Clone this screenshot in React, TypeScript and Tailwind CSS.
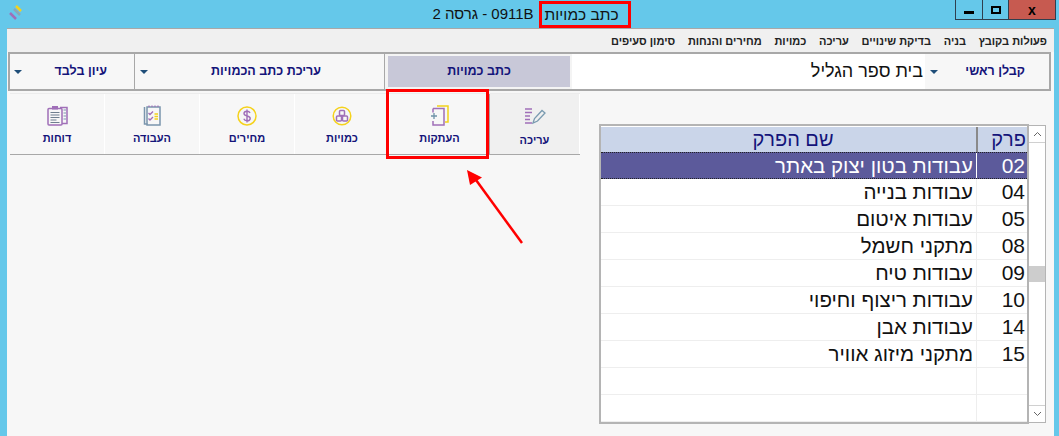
import { ReactNode } from 'react';

const menuItems = ['פעולות בקובץ', 'בניה', 'בדיקת שינויים', 'עריכה', 'כמויות', 'מחירים והנחות', 'סימון סעיפים'];

const rows = [
    ['02', 'עבודות בטון יצוק באתר'],
    ['04', 'עבודות בנייה'],
    ['05', 'עבודות איטום'],
    ['08', 'מתקני חשמל'],
    ['09', 'עבודות טיח'],
    ['10', 'עבודות ריצוף וחיפוי'],
    ['14', 'עבודות אבן'],
    ['15', 'מתקני מיזוג אוויר'],
    ['', ''],
    ['', ''],
];

const Caret = () => <span className="w-0 h-0 border-x-[4px] border-x-transparent border-t-[4px] border-t-[#1f4e79]" />;

const EditIcon = () => (
    <svg width="22" height="18" viewBox="0 0 22 18" fill="none">
        <path d="M1 2h7M1 5.500h7M1 9h5M1 12.500h5M1 16h7" stroke="#a06fb8" strokeWidth="1.500" />
        <path d="M9 16l1.500-4.500L18 3.500l3 2.500-7.500 8z" stroke="#7a9bb0" strokeWidth="1.300" />
    </svg>
);

const CopyIcon = () => (
    <svg width="20" height="21" viewBox="0 0 20 21" fill="none">
        <path d="M7 1h11v16h-3" stroke="#f2d21c" strokeWidth="1.500" />
        <path d="M3 3.500h11V20H3v-4M3 7.500V3.500" stroke="#a06fb8" strokeWidth="1.500" />
        <path d="M1 11h6M4 8v6" stroke="#6f93a8" strokeWidth="1.300" />
    </svg>
);

const QuantityIcon = () => (
    <svg width="20" height="20" viewBox="0 0 20 20" fill="none">
        <circle cx="10" cy="10" r="8.800" stroke="#f5d21c" strokeWidth="1.500" />
        <rect x="7.500" y="4.500" width="5" height="5" rx="1" stroke="#a06fb8" strokeWidth="1.500" />
        <rect x="4.500" y="10" width="5" height="5" rx="1" stroke="#a06fb8" strokeWidth="1.500" />
        <rect x="10.500" y="10" width="5" height="5" rx="1" stroke="#a06fb8" strokeWidth="1.500" />
    </svg>
);

const PriceIcon = () => (
    <svg width="20" height="20" viewBox="0 0 20 20" fill="none">
        <circle cx="10" cy="10" r="9" stroke="#f5d21c" strokeWidth="1.500" />
        <path d="M13 7c-.5-1.300-1.600-1.800-3-1.800-1.700 0-3 .8-3 2.300 0 3.300 6.200 1.600 6.200 4.900 0 1.500-1.400 2.400-3.200 2.400-1.500 0-2.700-.6-3.200-2M10 3.500v13" stroke="#a06fb8" strokeWidth="1.400" />
    </svg>
);

const WorkIcon = () => (
    <svg width="18" height="21" viewBox="0 0 18 21" fill="none">
        <path d="M1.500 2v17h3" stroke="#7a95ad" strokeWidth="1.500" />
        <rect x="4" y="2" width="13" height="18" stroke="#7a95ad" strokeWidth="1.500" />
        <path d="M6 2V0.500M9 2V0.500M12 2V0.500M15 2V0.500" stroke="#a06fb8" strokeWidth="1.200" />
        <path d="M5.500 8l1.500 1.500L10 6.500M5.500 13.500L7 15l3-3" stroke="#a06fb8" strokeWidth="1.400" />
        <path d="M11.500 9h3.500M11.500 11.500h3.500M11.500 14h3.500" stroke="#f2d21c" strokeWidth="1.300" />
    </svg>
);

const ReportIcon = () => (
    <svg width="21" height="21" viewBox="0 0 21 21" fill="none">
        <path d="M13 2.500h7v16h-5" stroke="#a06fb8" strokeWidth="1.500" />
        <rect x="1" y="3.500" width="14" height="16.500" rx="1" stroke="#a06fb8" strokeWidth="1.500" />
        <rect x="5" y="1" width="6" height="3.500" fill="#a06fb8" />
        <path d="M3.500 7.500h9M3.500 10h9M3.500 12.500h9M3.500 15h6M3.500 17.500h9" stroke="#6f7f8f" strokeWidth="1.100" />
        <path d="M16.500 5h2.500M16.500 8h2.500M16.500 11h2.500M16.500 14h2.500" stroke="#7a95ad" strokeWidth="1.100" />
    </svg>
);

const Tab = ({ icon, label, active, className }: { icon: ReactNode; label: string; active?: boolean; className?: string }) => (
    <div className={`h-full flex flex-col items-center pt-[10px] border-r border-white ${active ? 'bg-[#f0f0f0]' : ''} ${className ?? ''}`}>
        <div className="h-[23px] flex items-center justify-center">{icon}</div>
        <span className={`text-[11px] leading-[14px] font-bold text-[#14147a] ${active ? 'mt-[6px]' : 'mt-[4px]'}`}>{label}</span>
    </div>
);

const Arrow = () => (
    <svg className="absolute left-[460px] top-[168px]" width="70" height="80" viewBox="0 0 70 80" fill="none">
        <path d="M62 75L16 12" stroke="#f00" strokeWidth="2.500" />
        <path d="M7 2L22 9.500L10 17z" fill="#f00" />
    </svg>
);

export default function App() {
    return (
        <div className="relative w-[1059px] h-[436px] overflow-hidden bg-[#65c8ea] flex flex-col font-['Liberation_Sans',sans-serif]">
            {/* title bar */}
            <div className="h-[28px] shrink-0 grid grid-cols-[1fr_auto_1fr] items-start">
                <svg className="ml-[5px] mt-[2px]" width="25" height="22" viewBox="0 0 25 22" fill="none">
                    <path d="M5 11l6 6" stroke="#a06fb8" strokeWidth="2.500" />
                    <path d="M9 7l6 6" stroke="#8da5b8" strokeWidth="2.500" />
                    <path d="M11 4l5 5" stroke="#f5d21c" strokeWidth="2.500" />
                </svg>
                <div dir="rtl" className="flex items-center h-[28px] pl-[4px] text-[15px] text-[#111]">
                    <span className="h-[27px] leading-[21px] pr-[9px] pl-[3px] text-[15.500px] border-[3px] border-[#f00] whitespace-nowrap">כתב כמויות</span>
                    <span className="mr-[5px] whitespace-nowrap">0911B - גרסה 2</span>
                </div>
                <div className="flex justify-end pr-[3px]">
                    <div className="flex h-[20px] border border-t-0 border-[#2f3f4f]">
                        <div className="w-[27px] border-r border-[#2f3f4f] flex items-center justify-center">
                            <span className="w-[10px] h-[3px] mt-[5px] bg-black" />
                        </div>
                        <div className="w-[26px] border-r border-[#2f3f4f] flex items-center justify-center">
                            <span className="w-[10px] h-[8px] border-2 border-black" />
                        </div>
                        <div className="w-[46px] bg-[#c75a50] flex items-center justify-center text-[14px] font-bold text-black leading-none">x</div>
                    </div>
                </div>
            </div>

            {/* client area */}
            <div className="flex-1 ml-[7px] mr-[5px] bg-[#f7f7f7] border-t border-[#a8a8a8] flex flex-col">
                <div dir="rtl" className="h-[23px] shrink-0 bg-[#f0f0f0] flex items-center gap-[12.700px] pr-[7px] pt-px text-[11px] font-bold text-[#222]">
                    {menuItems.map((item) => (
                        <span key={item}>{item}</span>
                    ))}
                </div>

                <div dir="rtl" className="h-[39px] shrink-0 mr-[3px] ml-px flex border-2 border-[#a8a8a8] bg-[#f7f7f7] text-[#14147a] text-[12.500px] font-bold">
                    <div className="w-[124px] flex items-center justify-between pr-[24px] pl-[5px]">
                        <span>קבלן ראשי</span>
                        <Caret />
                    </div>
                    <div className="w-[353px] bg-white flex items-center pr-[2px] text-[#111]">
                        <span className="text-[18px] font-normal">בית ספר הגליל</span>
                    </div>
                    <div className="w-[187px] bg-[#c8c8d8] border-2 border-[#f4f4f4] border-l-[3px] flex items-center justify-center">כתב כמויות</div>
                    <div className="w-[251px] border-x border-[#a8a8a8] flex items-center justify-between pr-[63px] pl-[5px]">
                        <span>עריכת כתב הכמויות</span>
                        <Caret />
                    </div>
                    <div className="flex-1 flex items-center justify-between pr-[27px] pl-[4px]">
                        <span>עיון בלבד</span>
                        <Caret />
                    </div>
                </div>

                <div className="flex-1 flex justify-between">
                    {/* tool tabs */}
                    <div className="ml-[3px] mt-[2px] w-[570px] h-[62px] flex border-b border-[#a8a8a8] border-t border-t-[#ececec]">
                        <Tab className="w-[95px]" icon={<ReportIcon />} label="דוחות" />
                        <Tab className="w-[95px]" icon={<WorkIcon />} label="העבודה" />
                        <Tab className="w-[95px]" icon={<PriceIcon />} label="מחירים" />
                        <Tab className="w-[95px]" icon={<QuantityIcon />} label="כמויות" />
                        <div className="relative w-[100px]">
                            <Tab className="border-r-[#a8a8a8]" icon={<CopyIcon />} label="העתקות" />
                            <div className="absolute -left-[4px] -top-[5px] right-[1px] -bottom-[5px] border-[3px] border-[#f00]" />
                        </div>
                        <Tab className="flex-1" active icon={<EditIcon />} label="עריכה" />
                    </div>

                    {/* chapter table */}
                    <div className="mt-[33px] mr-[8px] flex h-[300px]">
                        <div dir="rtl" className="w-[430px] h-[300px] border-2 border-[#b4b4b4] bg-white flex flex-col text-[#111]">
                            <div className="h-[26px] shrink-0 flex bg-[#cad5e9] text-[#14147a] text-[20px] leading-[25px] border-t border-t-white">
                                <div className="w-[49px] text-center pl-[12px]">פרק</div>
                                <div className="flex-1 text-center border-r-2 border-[#8a8a8a] pl-[9px]">שם הפרק</div>
                            </div>
                            {rows.map(([code, name], i) => (
                                <div key={code + i} className={`h-[27px] shrink-0 flex leading-[26px] ${i === 0 ? 'bg-[#5c5a9b] text-white border-y border-dotted border-[#222]' : 'border-b border-[#eeeeee]'}`}>
                                    <div className="w-[50px] pr-[2px] text-[21px]">{code}</div>
                                    <div className={`flex-1 pr-[3px] text-[20.500px] border-r ${i === 0 ? 'border-white' : 'border-[#eeeeee]'}`}>{name}</div>
                                </div>
                            ))}
                        </div>
                        <div className="w-[17px] h-[298px] mt-px border border-l-0 border-[#b4b4b4] bg-white flex flex-col text-[#666]">
                            <div className="h-[17px] shrink-0 border-b border-[#d0d0d0] flex items-center justify-center">
                                <svg width="9" height="6" viewBox="0 0 9 6" fill="none"><path d="M1 5l3.500-3.500L8 5" stroke="#666" /></svg>
                            </div>
                            <div className="h-[16px] shrink-0 mt-[123px] bg-[#cdcdcd]" />
                            <div className="h-[17px] shrink-0 mt-auto border-t border-[#d0d0d0] flex items-center justify-center">
                                <svg width="9" height="6" viewBox="0 0 9 6" fill="none"><path d="M1 1l3.500 3.500L8 1" stroke="#666" /></svg>
                            </div>
                        </div>
                    </div>
                </div>
            </div>
            <Arrow />
        </div>
    );
}
